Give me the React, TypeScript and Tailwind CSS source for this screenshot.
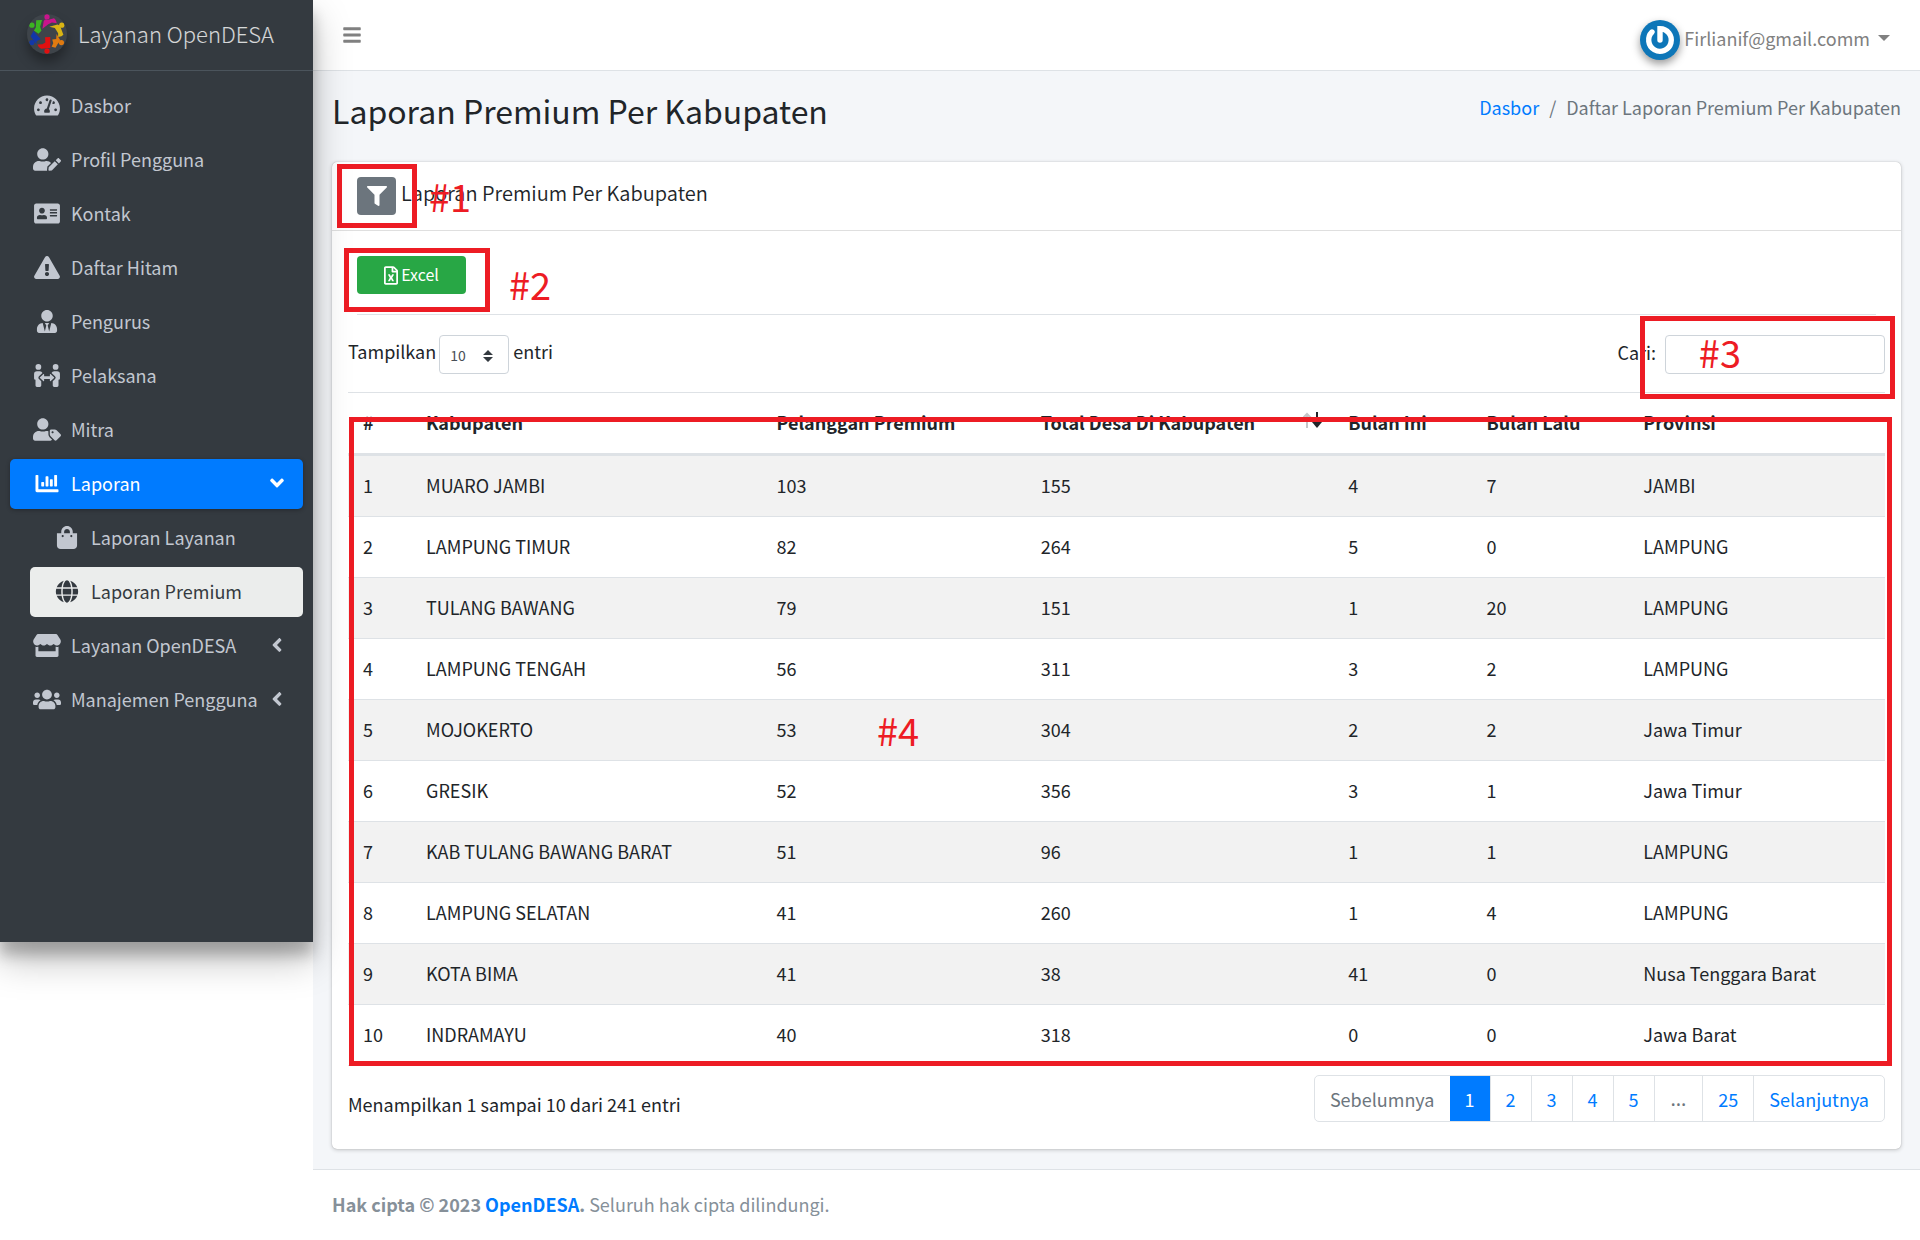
import type { ReactNode } from "react";
import type { IconType } from "react-icons";
import {
  FaTachometerAlt,
  FaUserEdit,
  FaAddressCard,
  FaExclamationTriangle,
  FaUserTie,
  FaPeopleArrows,
  FaUserTag,
  FaChartBar,
  FaShoppingBag,
  FaGlobe,
  FaStore,
  FaUsers,
  FaAngleLeft,
  FaAngleDown,
  FaBars,
  FaFilter,
  FaRegFileExcel,
} from "react-icons/fa";

const rows = [
  ["MUARO JAMBI", 103, 155, 4, 7, "JAMBI"],
  ["LAMPUNG TIMUR", 82, 264, 5, 0, "LAMPUNG"],
  ["TULANG BAWANG", 79, 151, 1, 20, "LAMPUNG"],
  ["LAMPUNG TENGAH", 56, 311, 3, 2, "LAMPUNG"],
  ["MOJOKERTO", 53, 304, 2, 2, "Jawa Timur"],
  ["GRESIK", 52, 356, 3, 1, "Jawa Timur"],
  ["KAB TULANG BAWANG BARAT", 51, 96, 1, 1, "LAMPUNG"],
  ["LAMPUNG SELATAN", 41, 260, 1, 4, "LAMPUNG"],
  ["KOTA BIMA", 41, 38, 41, 0, "Nusa Tenggara Barat"],
  ["INDRAMAYU", 40, 318, 0, 0, "Jawa Barat"],
];

const columns = [
  { label: "#", width: "w-[4.1%]" },
  { label: "Kabupaten", width: "w-[22.8%]" },
  { label: "Pelanggan Premium", width: "w-[17.2%]" },
  { label: "Total Desa Di Kabupaten", width: "w-[20%]" },
  { label: "Bulan Ini", width: "w-[9%]" },
  { label: "Bulan Lalu", width: "w-[10.2%]" },
  { label: "Provinsi", width: "w-[16.7%]" },
];

function BrandLogo() {
  return (
    <svg viewBox="19 25 122 122" className="size-10 rounded-full bg-white/5 shadow-[0_8px_12px_rgba(0,0,0,0.35)]" aria-hidden="true">
      <g fill="#c9148c">
        <circle cx="80" cy="34" r="8" />
        <path d="M66 70 L70 46 Q74 40 82 43 L101 38 Q106 39 110 53 L95 51 L84 56 Z" />
      </g>
      <g fill="#d9b414">
        <circle cx="125" cy="59" r="8" />
        <path d="M87 64 L112 57 Q120 58 122 67 L130 88 Q126 94 114 95 L114 84 L104 68 Z" />
      </g>
      <g fill="#e07a10">
        <circle cx="124" cy="112" r="8" />
        <path d="M109 86 L120 104 Q118 112 112 117 L106 128 L94 125 L99 114 L96 103 L108 101 Z" />
      </g>
      <g fill="#e01010">
        <circle cx="80" cy="138" r="8" />
        <path d="M90 95 L90 129 L62 131 Q54 128 51 118 L66 117 L75 112 L74 96 Z" />
      </g>
      <g fill="#1237a8">
        <circle cx="34" cy="112" r="8" />
        <path d="M39 77 L50 90 L61 101 L48 108 L48 117 L38 104 L30 93 Z" />
      </g>
      <g fill="#3cb521">
        <circle cx="34" cy="59" r="8" />
        <path d="M47 44 L65 43 L59 64 L63 76 L54 85 L40 75 L46 66 Z" />
      </g>
    </svg>
  );
}

function Avatar() {
  return (
    <svg viewBox="0 0 40 40" className="size-10 rounded-full bg-[#0d76b8] shadow-[0_4px_8px_rgba(0,0,0,0.4)]" aria-hidden="true">
      <path d="M20 20 V8.7 A11.3 11.3 0 1 1 12 12" fill="none" stroke="#fff" strokeWidth="5.4" strokeLinecap="round" />
    </svg>
  );
}

type NavProps = { icon: IconType; label: string; variant?: "plain" | "active" | "sub" | "subActive"; arrow?: "left" | "down" };

function NavItem({ icon: Icon, label, variant = "plain", arrow }: NavProps) {
  const tone =
    variant === "active"
      ? "bg-[#007bff] text-white shadow-[0_1px_4px_rgba(0,0,0,0.3)]"
      : variant === "subActive"
        ? "ml-5 bg-[#ebedec] text-[#343a40]"
        : variant === "sub"
          ? "ml-5 text-[#c2c7d0]"
          : "text-[#c2c7d0]";
  return (
    <li>
      <a href="#" className={`flex h-[50px] items-center rounded-[5px] pl-5 pr-4 ${tone}`}>
        <span className="mr-[7px] flex w-[34px] shrink-0 justify-center pb-[2px]">
          <Icon className="h-[23px] w-7" />
        </span>
        <span className="flex-1 whitespace-nowrap pb-[2px]">{label}</span>
        {arrow && (
          <span className="flex w-5 shrink-0 justify-center pb-[2px]">
            {arrow === "down" ? <FaAngleDown className="size-[22px]" /> : <FaAngleLeft className="size-[22px]" />}
          </span>
        )}
      </a>
    </li>
  );
}

function Frame({ className }: { className: string }) {
  return <div className={`pointer-events-none absolute z-10 border-[5px] border-[#ed1c24] ${className}`} />;
}

function Mark({ className, children }: { className: string; children: ReactNode }) {
  return <span className={`pointer-events-none absolute z-10 text-[38px] leading-10 text-[#ed1c24] ${className}`}>{children}</span>;
}

const pages = ["Sebelumnya", "1", "2", "3", "4", "5", "…", "25", "Selanjutnya"];

export default function App() {
  return (
    <div className="flex min-h-screen items-start bg-white font-['Noto_Sans_CJK_SC',sans-serif] text-[18px] leading-[30px] text-[#212529]">
      <aside className="relative z-20 min-h-[76vh] w-[313px] shrink-0 bg-[#343a40] shadow-[0_18px_35px_rgba(0,0,0,0.25),0_13px_13px_rgba(0,0,0,0.22)]">
        <a href="#" className="flex h-[71px] items-center gap-[11px] border-b border-[#4b545c] pl-[27px] pb-[2px] text-[22px] font-light text-white/80">
          <BrandLogo />
          <span className="pb-[2px]">Layanan OpenDESA</span>
        </a>
        <nav className="px-[10px] pt-[10px]">
          <ul className="flex flex-col gap-1">
            <NavItem icon={FaTachometerAlt} label="Dasbor" />
            <NavItem icon={FaUserEdit} label="Profil Pengguna" />
            <NavItem icon={FaAddressCard} label="Kontak" />
            <NavItem icon={FaExclamationTriangle} label="Daftar Hitam" />
            <NavItem icon={FaUserTie} label="Pengurus" />
            <NavItem icon={FaPeopleArrows} label="Pelaksana" />
            <NavItem icon={FaUserTag} label="Mitra" />
            <NavItem icon={FaChartBar} label="Laporan" variant="active" arrow="down" />
            <NavItem icon={FaShoppingBag} label="Laporan Layanan" variant="sub" />
            <NavItem icon={FaGlobe} label="Laporan Premium" variant="subActive" />
            <NavItem icon={FaStore} label="Layanan OpenDESA" arrow="left" />
            <NavItem icon={FaUsers} label="Manajemen Pengguna" arrow="left" />
          </ul>
        </nav>
      </aside>

      <div className="flex min-w-0 flex-1 flex-col">
        <header className="flex h-[71px] items-center justify-between border-b border-[#dee2e6] bg-white pl-[29px] pr-[30px]">
          <button type="button" aria-label="Menu" className="text-[#808080]">
            <FaBars className="size-5" />
          </button>
          <button type="button" className="flex items-center pt-[10px] text-[#808080]">
            <Avatar />
            <span className="ml-1 pb-1">Firlianif@gmail.comm</span>
            <span className="-mt-1 ml-2 border-x-[6px] border-t-[6px] border-x-transparent border-t-[#808080]" />
          </button>
        </header>

        <main className="bg-[#f4f6f9] px-[19px] pb-5 pt-[15px]">
          <div className="mb-7 flex items-start justify-between">
            <h1 className="text-[32px] leading-[48px]">Laporan Premium Per Kabupaten</h1>
            <nav aria-label="Breadcrumb" className="pt-[6px] text-[#6c757d]">
              <ol className="flex gap-[10px]">
                <li><a href="#" className="text-[#007bff]">Dasbor</a></li>
                <li aria-hidden="true">/</li>
                <li>Daftar Laporan Premium Per Kabupaten</li>
              </ol>
            </nav>
          </div>

          <section className="rounded-[5px] bg-white shadow-[0_0_1px_rgba(0,0,0,0.3),0_1px_4px_rgba(0,0,0,0.2)]">
            <div className="relative flex h-[69px] items-start border-b border-[#dfdfdf] pl-[25px] pt-[15px]">
              <button type="button" aria-label="Filter" className="flex h-[38px] w-[39px] items-center justify-center rounded bg-[#6c757d] text-white">
                <FaFilter className="size-5" />
              </button>
              <h2 className="ml-[5px] pt-px text-[20px] font-[350]">Laporan Premium Per Kabupaten</h2>
              <Frame className="left-[5px] top-[2px] h-16 w-20" />
              <Mark className="left-[97px] top-[14px]">#1</Mark>
            </div>

            <div className="relative px-[25px] pt-[25px]">
              <div className="border-b border-[#dee2e6] pb-5">
                <button type="button" className="flex h-[38px] w-[109px] items-center justify-center gap-[3px] rounded bg-[#28a745] text-[16px] text-white">
                  <FaRegFileExcel className="h-[19px] w-[14px]" />
                  <span className="pb-[2px]">Excel</span>
                </button>
              </div>
              <Frame className="left-3 top-[17px] h-16 w-[146px]" />
              <Mark className="left-[177px] top-[33px]">#2</Mark>
            </div>

            <div className="px-4 pb-[27px]">
              <div className="relative flex items-start justify-between border-b border-[#dee2e6] pb-[18px] pt-5">
                <label className="flex pt-px">
                  Tampilkan
                  <span className="relative -mt-px ml-[3px] mr-1 block">
                    <select defaultValue="10" className="block h-[39px] w-[70px] appearance-none rounded border border-[#ced4da] bg-white pl-[10px] text-[14px] text-[#495057]">
                      <option>10</option>
                      <option>25</option>
                      <option>50</option>
                      <option>100</option>
                    </select>
                    <svg viewBox="0 0 10 12" className="pointer-events-none absolute right-4 top-[15px] h-3 w-[10px] fill-[#343a40]" aria-hidden="true">
                      <path d="M5 0 L10 5 H0 Z M0 7 H10 L5 12 Z" />
                    </svg>
                  </span>
                  entri
                </label>
                <label className="flex pt-[2px]">
                  Cari:
                  <input type="search" className="-mt-[2px] ml-[9px] h-[39px] w-[220px] rounded border border-[#ced4da] px-3" />
                </label>
                <Frame className="-right-[10px] top-[1px] h-[83px] w-[255px]" />
                <Mark className="right-[144px] top-[17px]">#3</Mark>
              </div>

              <div className="relative">
                <table className="w-full table-fixed border-separate border-spacing-0 text-left">
                  <thead>
                    <tr>
                      {columns.map((column) => (
                        <th key={column.label} className={`relative whitespace-nowrap border-b-[3px] border-[#dee2e6] px-[15px] pb-4 pt-[14px] font-bold ${column.width}`}>
                          {column.label}
                          {column.label.startsWith("Total") && (
                            <svg viewBox="0 0 20 16" className="absolute right-[10px] top-[19px] h-4 w-5" fill="none" aria-hidden="true">
                              <path d="M4 16 V3 M0 6 L4 2 L8 6" stroke="#c4c6c8" strokeWidth="2" />
                              <path d="M14 0 V12" stroke="#212529" strokeWidth="2" />
                              <path d="M9 10 L11 9 H17 L19 10 L14 16 Z" fill="#212529" />
                            </svg>
                          )}
                        </th>
                      ))}
                    </tr>
                  </thead>
                  <tbody>
                    {rows.map((row, index) => (
                      <tr key={index} className="odd:bg-[#f2f2f2]">
                        {[index + 1, ...row].map((cell, cellIndex) => (
                          <td key={cellIndex} className="whitespace-nowrap border-b border-[#dee2e6] px-[15px] pb-4 pt-[14px]">
                            {cell}
                          </td>
                        ))}
                      </tr>
                    ))}
                  </tbody>
                </table>
                <Frame className="-right-[7px] bottom-0 left-[1px] top-6" />
                <Mark className="left-[529px] top-[317px]">#4</Mark>
              </div>

              <div className="flex items-start justify-between pt-[9px]">
                <p className="pt-[14px]">Menampilkan 1 sampai 10 dari 241 entri</p>
                <nav aria-label="Halaman">
                  <ul className="flex overflow-hidden rounded-[5px] border border-[#dee2e6]">
                    {pages.map((page) => (
                      <li key={page} className="border-l border-[#dee2e6] first:border-l-0">
                        <a
                          href="#"
                          className={`block ${
                            page === "1"
                              ? "-my-px -ml-px h-[47px] bg-[#007bff] px-[15px] pt-[9px] text-white"
                              : page === "…"
                                ? "h-[45px] px-4 pt-2 font-['Noto_Sans',sans-serif] text-[20px] text-[#6c757d]"
                                : page === "Sebelumnya"
                                  ? "h-[45px] px-[15px] pt-2 text-[#6c757d]"
                                  : "h-[45px] px-[15px] pt-2 text-[#007bff]"
                          }`}
                        >
                          {page}
                        </a>
                      </li>
                    ))}
                  </ul>
                </nav>
              </div>
            </div>
          </section>
        </main>

        <footer className="border-t border-[#dee2e6] bg-white px-[19px] pb-[21px] pt-[19px] text-[#869099]">
          <strong className="font-bold">
            Hak cipta © 2023 <a href="#" className="text-[#007bff]">OpenDESA</a>.
          </strong>{" "}
          Seluruh hak cipta dilindungi.
        </footer>
      </div>
    </div>
  );
}
